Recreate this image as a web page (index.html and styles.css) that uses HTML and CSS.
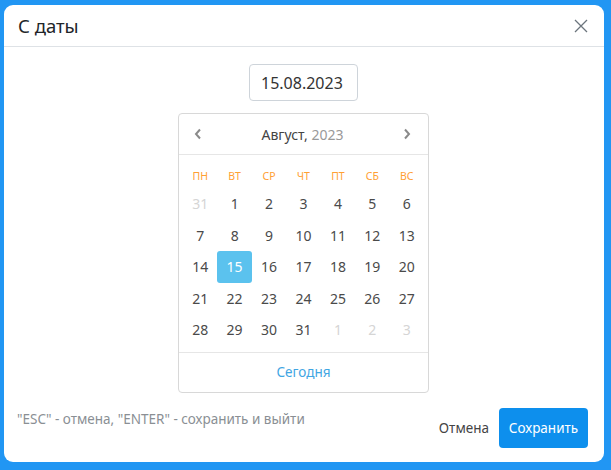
FILE: index.html
```html
<!DOCTYPE html>
<html lang="ru">
<head>
<meta charset="utf-8">
<link rel="stylesheet" href="styles.css">
</head>
<body>
<div class="dialog">
  <div class="header">
    <div class="title">С даты</div>
    <svg class="close" width="14" height="14" viewBox="0 0 14 14"><path d="M1 1L13 13M13 1L1 13" stroke="#6c757d" stroke-width="1.3" fill="none"/></svg>
  </div>
  <div class="body">
    <div class="input">15.08.2023</div>
    <div class="cal">
      <div class="cal-head">
        <svg width="8" height="12" viewBox="0 0 8 12"><path d="M6 1.5L2 6l4 4.5" stroke="#8a8a8a" stroke-width="2" fill="none"/></svg>
        <div class="month">Август, <span class="year">2023</span></div>
        <svg width="8" height="12" viewBox="0 0 8 12"><path d="M2 1.5L6 6l-4 4.5" stroke="#8a8a8a" stroke-width="2" fill="none"/></svg>
      </div>
      <div class="grid">
        <div class="wd">пн</div><div class="wd">вт</div><div class="wd">ср</div><div class="wd">чт</div><div class="wd">пт</div><div class="wd">сб</div><div class="wd">вс</div>
        <div class="d other">31</div><div class="d">1</div><div class="d">2</div><div class="d">3</div><div class="d">4</div><div class="d">5</div><div class="d">6</div>
        <div class="d">7</div><div class="d">8</div><div class="d">9</div><div class="d">10</div><div class="d">11</div><div class="d">12</div><div class="d">13</div>
        <div class="d">14</div><div class="d sel">15</div><div class="d">16</div><div class="d">17</div><div class="d">18</div><div class="d">19</div><div class="d">20</div>
        <div class="d">21</div><div class="d">22</div><div class="d">23</div><div class="d">24</div><div class="d">25</div><div class="d">26</div><div class="d">27</div>
        <div class="d">28</div><div class="d">29</div><div class="d">30</div><div class="d">31</div><div class="d other">1</div><div class="d other">2</div><div class="d other">3</div>
      </div>
      <div class="cal-foot">Сегодня</div>
    </div>
  </div>
  <div class="footer">
    <div class="hint">"ESC" - отмена, "ENTER" - сохранить и выйти</div>
    <div class="actions">
      <span class="cancel">Отмена</span>
      <span class="save">Сохранить</span>
    </div>
  </div>
</div>
</body>
</html>
```
FILE: styles.css
```css
html, body { margin: 0; padding: 0; }
body {
  background: #2196f3;
  width: 611px;
  height: 470px;
  padding: 5px 0 0 4px;
  box-sizing: border-box;
  font-family: "Noto Sans", "Open Sans", sans-serif;
  overflow: hidden;
}
.dialog {
  width: 600px;
  height: 457px;
  background: #fff;
  border-radius: 9px;
  display: flex;
  flex-direction: column;
}
.header {
  height: 42px;
  box-sizing: border-box;
  border-bottom: 1px solid #dee2e6;
  display: flex;
  align-items: center;
  justify-content: space-between;
  padding: 0 16px 0 14px;
}
.title { font-size: 18.5px; color: #212529; }
.close { display: block; }
.body {
  display: flex;
  flex-direction: column;
  align-items: center;
  padding-top: 17px;
  padding-right: 1px;
}
.input {
  width: 109px;
  height: 37px;
  box-sizing: border-box;
  border: 1px solid #ced4da;
  border-radius: 4px;
  padding-left: 11px;
  display: flex;
  align-items: center;
  font-size: 16px;
  color: #333;
}
.cal {
  margin-top: 12px;
  width: 251px;
  box-sizing: border-box;
  border: 1px solid #d8d8d8;
  border-radius: 4px;
}
.cal-head {
  height: 41px;
  box-sizing: border-box;
  border-bottom: 1px solid #e6e6e6;
  display: flex;
  align-items: center;
  justify-content: space-between;
  padding: 0 17px 0 15px;
}
.cal-head svg { display: block; }
.month { font-size: 14px; color: #444; }
.year { color: #999; }
.grid {
  display: grid;
  grid-template-columns: repeat(7, 1fr);
  grid-template-rows: 25px repeat(5, 31.5px);
  padding: 8px 4px 6px 4px;
}
.wd {
  text-transform: uppercase;
  font-size: 10.5px;
  color: #ffa033;
  display: flex;
  align-items: center;
  justify-content: center;
}
.d {
  font-size: 14px;
  color: #4a4a4a;
  display: flex;
  align-items: center;
  justify-content: center;
  border-radius: 3px;
}
.d.other { color: #d5d5d5; }
.d.sel { background: #5bc2ee; color: #fff; }
.cal-foot {
  border-top: 1px solid #e6e6e6;
  height: 39px;
  display: flex;
  align-items: center;
  justify-content: center;
  font-size: 13.5px;
  color: #3fa6e3;
}
.footer {
  margin-top: auto;
  display: flex;
  justify-content: space-between;
  padding: 0 16px 14px 13px;
}
.hint {
  font-size: 13.5px;
  color: #8a8f94;
  padding-top: 2px;
}
.actions {
  display: flex;
  align-items: center;
  gap: 10px;
}
.cancel { font-size: 13.5px; color: #444; }
.save {
  background: #0d8fed;
  color: #fff;
  font-size: 13.5px;
  height: 40px;
  width: 89px;
  border-radius: 4px;
  display: flex;
  align-items: center;
  justify-content: center;
}
```
